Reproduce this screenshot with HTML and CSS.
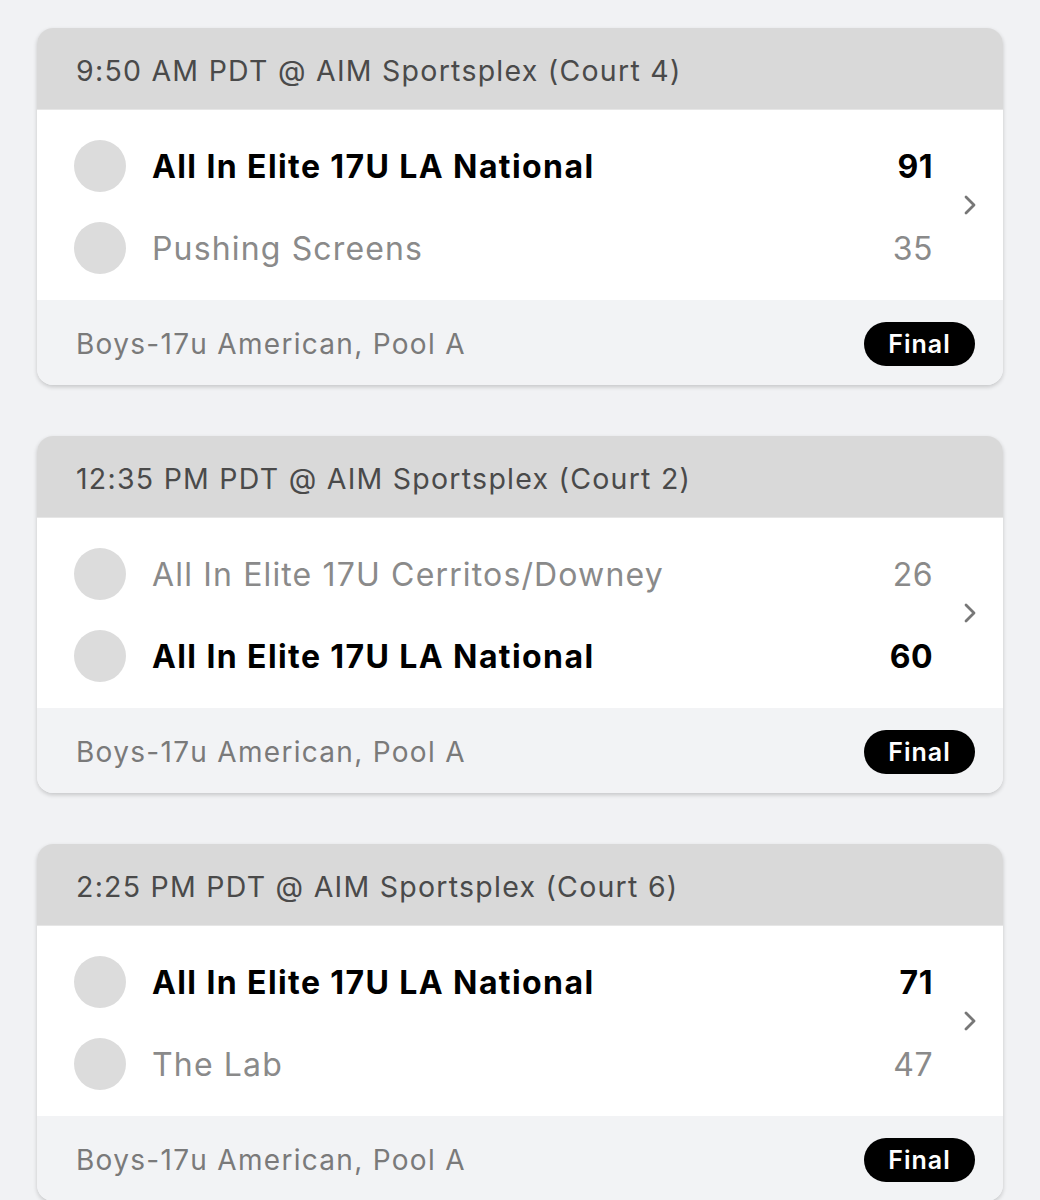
FILE: index.html
```html
<!DOCTYPE html>
<html lang="en">
<head>
    <meta charset="UTF-8">
    <meta name="viewport" content="width=device-width, initial-scale=1.0">
    <title>Schedule</title>
    <link rel="stylesheet" href="styles.css">
</head>
<body>
    <div class="games">

        <div class="game-card">
            <div class="game-head">9:50 AM PDT @ AIM Sportsplex (Court 4)</div>
            <div class="game-body">
                <div class="teams">
                    <div class="team winner">
                        <span class="logo"></span>
                        <span class="name">All In Elite 17U LA National</span>
                        <span class="score">91</span>
                    </div>
                    <div class="team">
                        <span class="logo"></span>
                        <span class="name">Pushing Screens</span>
                        <span class="score">35</span>
                    </div>
                </div>
                <svg class="chevron" viewBox="0 0 14 22" width="14" height="22"><path d="M3 3l8 8-8 8" fill="none" stroke="#777" stroke-width="2.8" stroke-linecap="round" stroke-linejoin="round"/></svg>
            </div>
            <div class="game-foot">
                <span class="division">Boys-17u American, Pool A</span>
                <span class="status">Final</span>
            </div>
        </div>

        <div class="game-card">
            <div class="game-head">12:35 PM PDT @ AIM Sportsplex (Court 2)</div>
            <div class="game-body">
                <div class="teams">
                    <div class="team">
                        <span class="logo"></span>
                        <span class="name">All In Elite 17U Cerritos/Downey</span>
                        <span class="score">26</span>
                    </div>
                    <div class="team winner">
                        <span class="logo"></span>
                        <span class="name">All In Elite 17U LA National</span>
                        <span class="score">60</span>
                    </div>
                </div>
                <svg class="chevron" viewBox="0 0 14 22" width="14" height="22"><path d="M3 3l8 8-8 8" fill="none" stroke="#777" stroke-width="2.8" stroke-linecap="round" stroke-linejoin="round"/></svg>
            </div>
            <div class="game-foot">
                <span class="division">Boys-17u American, Pool A</span>
                <span class="status">Final</span>
            </div>
        </div>

        <div class="game-card">
            <div class="game-head">2:25 PM PDT @ AIM Sportsplex (Court 6)</div>
            <div class="game-body">
                <div class="teams">
                    <div class="team winner">
                        <span class="logo"></span>
                        <span class="name">All In Elite 17U LA National</span>
                        <span class="score">71</span>
                    </div>
                    <div class="team">
                        <span class="logo"></span>
                        <span class="name">The Lab</span>
                        <span class="score">47</span>
                    </div>
                </div>
                <svg class="chevron" viewBox="0 0 14 22" width="14" height="22"><path d="M3 3l8 8-8 8" fill="none" stroke="#777" stroke-width="2.8" stroke-linecap="round" stroke-linejoin="round"/></svg>
            </div>
            <div class="game-foot">
                <span class="division">Boys-17u American, Pool A</span>
                <span class="status">Final</span>
            </div>
        </div>

    </div>
</body>
</html>
```

FILE: styles.css
```css
body {
    margin: 0;
    background: #f1f2f4;
    font-family: Inter, "Noto Sans", sans-serif;
}
.games {
    padding: 28px 37px 0;
}
.game-card {
    border-radius: 16px;
    overflow: hidden;
    margin-bottom: 51px;
    box-shadow: 0 2px 4px rgba(0, 0, 0, 0.18);
}
.game-head {
    height: 82px;
    background: #d9d9d9;
    border-bottom: 1px solid #e6e6e6;
    box-sizing: border-box;
    padding: 3px 0 0 39px;
    display: flex;
    align-items: center;
    font-size: 28.5px;
    color: #4a4a4a;
    letter-spacing: 1.25px;
}
.game-body {
    height: 190px;
    background: #fff;
    display: flex;
    align-items: center;
}
.teams {
    flex: 1;
    padding: 4px 0 0 37px;
}
.team {
    height: 82px;
    display: flex;
    align-items: center;
    font-size: 32px;
    color: #8a8a8a;
    letter-spacing: 1.15px;
}
.team.winner {
    color: #000;
    font-weight: 700;
    letter-spacing: 1.4px;
}
.logo {
    width: 52px;
    height: 52px;
    border-radius: 50%;
    background: #dcdcdc;
    margin-right: 26px;
}
.name {
    flex: 1;
}
.score {
    width: 80px;
    text-align: right;
    letter-spacing: 0.5px;
}
.chevron {
    margin: 0 26px 0 30px;
}
.game-foot {
    height: 85px;
    box-sizing: border-box;
    background: #f2f3f5;
    display: flex;
    align-items: center;
    justify-content: space-between;
    padding: 2px 28px 0 39px;
}
.division {
    font-size: 28px;
    color: #7a7a7a;
    letter-spacing: 1.3px;
}
.status {
    background: #000;
    color: #fff;
    font-size: 25px;
    font-weight: 600;
    letter-spacing: 1px;
    height: 44px;
    width: 111px;
    border-radius: 22px;
    display: flex;
    align-items: center;
    justify-content: center;
}
```
